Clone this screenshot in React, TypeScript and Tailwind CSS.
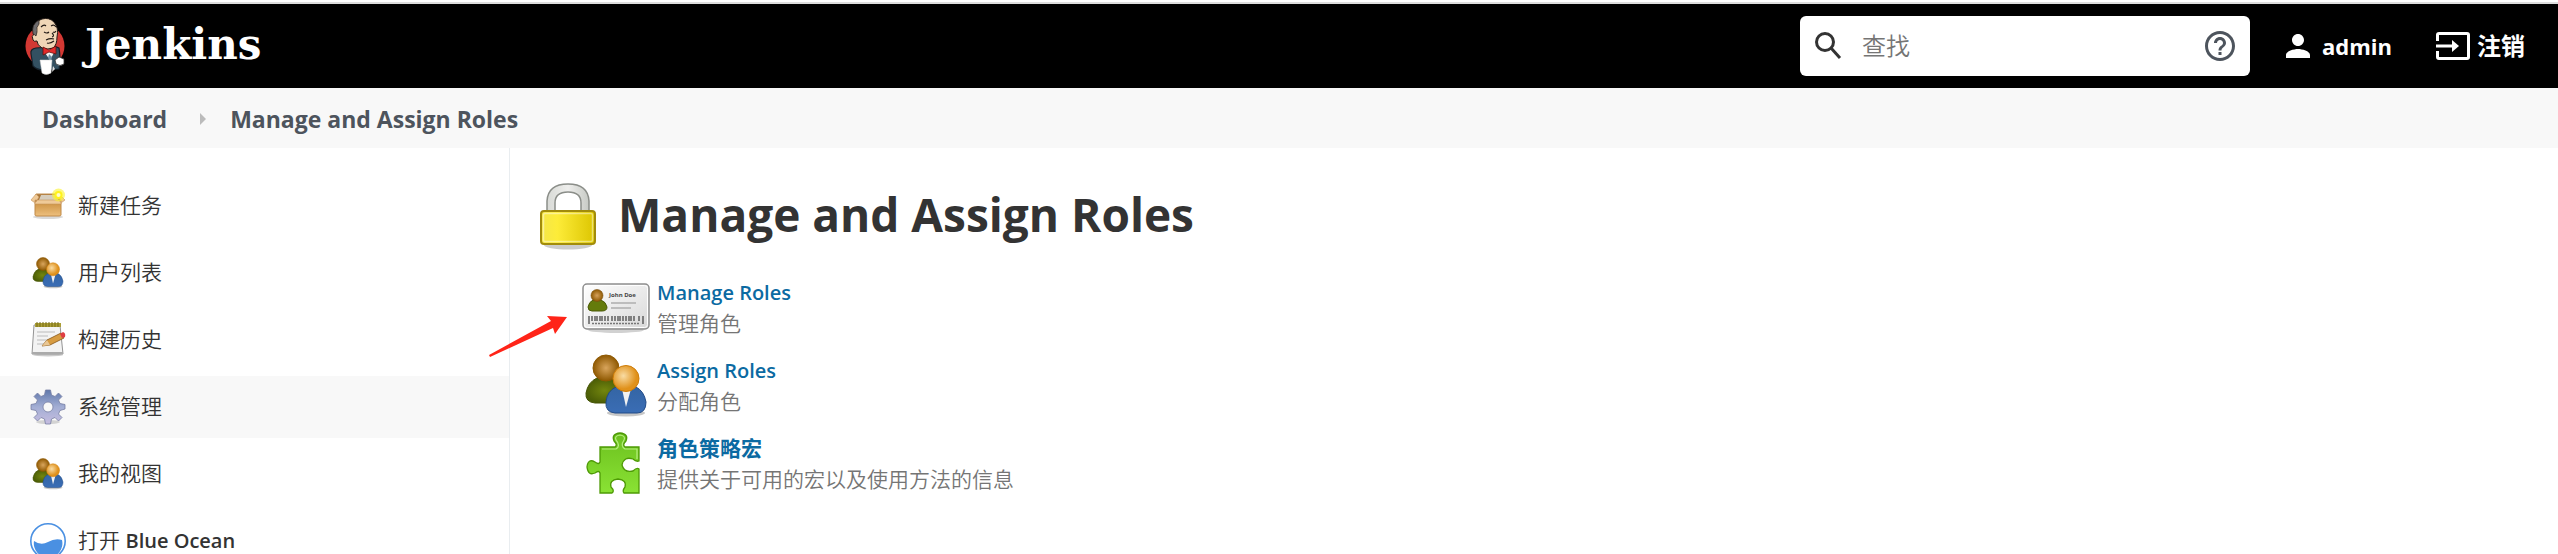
import React from "react";

function Butler() {
  return (
    <svg viewBox="0 0 60 70" className="h-[70px] w-[60px]" aria-hidden="true">
      <ellipse cx="30" cy="35" rx="19.500" ry="20.500" fill="#d33833" />
      <path d="M21 37 Q15 38 16 43 L18 55 Q22 59 28 59 L44 58 Q46 48 44 37 Q40 35 35 36 Z" fill="#335061" stroke="#14202a" strokeWidth="1.200" />
      <path d="M28 39 L35 49 L40 40 L34 37 Z" fill="#f4f4f4" />
      <path d="M34 43 L37 46 L36 50 L33 47Z" fill="#6d8fa3" />
      <path d="M19 23 Q16 25 18 29 Q19 31 22 30 Q22 34 27 37 Q33 39 38 37 Q42 34 42 26 Q44 17 39 11 Q34 6 27 8 Q18 11 18 19 Z" fill="#f0d6b7" stroke="#221a16" strokeWidth="1" />
      <path d="M18 23 Q16 13 24 9 L24 13 Q21 16 22 21 L21 25 Q19 23 18 23 Z" fill="#6d6b6d" stroke="#221a16" strokeWidth=".7" />
      <path d="M26 16 Q29 13 31 15 M36 15 Q39 13 41 16 M29 21 Q32 23 34 21 M38 21 Q40 22 41 20 M37 22 Q40 25 37 26 M31 29 Q35 27 39 28 M32 32 Q35 33 39 30" fill="none" stroke="#221a16" strokeWidth="1.100" />
      <path d="M28 36 L34 39 L41 35 L41 43 L34 41 L28 44 Z" fill="#e22b2b" stroke="#61100d" strokeWidth=".8" />
      <path d="M25 49 H37 L36 62 Q31 65 27 62 Z" fill="#fff" stroke="#ccc" strokeWidth=".5" />
      <path d="M40 49 L44 46 L49 48 V53 Q45 56 41 53 Z" fill="#fff" stroke="#333" strokeWidth=".8" />
      <path d="M38 55 L40 58 L37 61Z" fill="#ddd" />
    </svg>
  );
}

function People({ className }: { className: string }) {
  return (
    <svg viewBox="0 0 64 64" className={className} aria-hidden="true">
      <defs>
        <radialGradient id="brown"><stop offset="0" stopColor="#d9a55c" /><stop offset="1" stopColor="#8f5902" /></radialGradient>
        <radialGradient id="orange" cx=".4" cy=".4"><stop offset="0" stopColor="#f9dca4" /><stop offset="1" stopColor="#e0911b" /></radialGradient>
        <linearGradient id="blue" x2="0" y2="1"><stop offset="0" stopColor="#3465a4" /><stop offset="1" stopColor="#3a6db5" /></linearGradient>
        <radialGradient id="olive"><stop offset="0" stopColor="#73860e" /><stop offset="1" stopColor="#4c5e06" /></radialGradient>
      </defs>
      <ellipse cx="42" cy="59" rx="19" ry="3.500" fill="#000" opacity=".22" />
      <path d="M2 39 Q4 28 13 24 H31 Q38 27 39 39 Q38 48 28 49 H11 Q1 48 2 39Z" fill="url(#olive)" stroke="#445304" />
      <circle cx="22" cy="14" r="13" fill="url(#brown)" stroke="#8f5902" />
      <path d="M22 48 Q23 37 32 33 H52 Q60 37 62 48 Q62 59 53 59 H31 Q21 58 22 48Z" fill="url(#blue)" stroke="#204a87" />
      <path d="M38 35 H47 L42 53Z" fill="#f2f2f2" />
      <circle cx="42" cy="24.500" r="13" fill="url(#orange)" stroke="#ce7c08" />
    </svg>
  );
}

function Box() {
  return (
    <svg viewBox="0 0 36 36" className="size-9" aria-hidden="true">
      <defs><linearGradient id="box" x2="0" y2="1"><stop offset="0" stopColor="#c98e3c" /><stop offset="1" stopColor="#edbf7e" /></linearGradient></defs>
      <ellipse cx="18" cy="29" rx="15" ry="2" fill="#000" opacity=".15" />
      <path d="M6 6 H29 L31 13 H5Z" fill="#a8763a" stroke="#c39052" />
      <path d="M11 7 L27 7 L28 12 H9Z" fill="#d6cdbd" />
      <path d="M5 13 H31 V27 Q31 28 29 28 H7 Q5 28 5 27Z" fill="url(#box)" stroke="#c08a49" />
      <path d="M6 6 L1 12 Q4 15 6 14 L9 9Z M30 7 L35 12 Q32 15 30 14Z M5 12 H31 V16 H5Z" fill="#efca98" stroke="#c6945a" strokeWidth=".6" />
      <circle cx="28.500" cy="7" r="6.500" fill="#faf32d" opacity=".6" /><circle cx="28.500" cy="7" r="4" fill="#fff21c" /><circle cx="28.500" cy="7" r="2" fill="#fffccc" />
    </svg>
  );
}

function Notepad() {
  return (
    <svg viewBox="0 0 36 36" className="size-9" aria-hidden="true">
      <ellipse cx="18" cy="33" rx="15" ry="1.500" fill="#000" opacity=".2" />
      <path d="M4 3 H30 L33 32 H2Z" fill="#f3f3f3" stroke="#949494" /><path d="M2 30 H33 V32 H2Z" fill="#aaa" />
      <path d="M5 1 H31 V5 H5Z" fill="#ab9e35" />
      <path d="M7 0 V5 M10 0 V5 M13 0 V5 M16 0 V5 M19 0 V5 M22 0 V5 M25 0 V5 M28 0 V5" stroke="#746b16" />
      <path d="M7 10 H25 M7 14 H18 M7 18 H25 M7 22 H15" stroke="#bbb" />
      <path d="M12 24 L17 18 L31 11 L34 16 L20 23Z" fill="#d79c42" stroke="#875617" strokeWidth=".8" />
      <path d="M12 24 L17 18 L20 23Z" fill="#e9c795" /><path d="M30 12 L33 10 Q36 11 35 15 L32 16Z" fill="#df3d43" />
    </svg>
  );
}

function Gear() {
  return (
    <svg viewBox="0 0 36 36" className="size-9" aria-hidden="true">
      <defs><linearGradient id="gear" x2="0" y2="1"><stop offset="0" stopColor="#6078ab" /><stop offset=".5" stopColor="#a3aed4" /><stop offset="1" stopColor="#c6bde0" /></linearGradient></defs>
      <ellipse cx="18" cy="33" rx="12" ry="2" fill="#000" opacity=".15" />
      <path fill="url(#gear)" stroke="#777fa3" strokeWidth=".8" fillRule="evenodd" d="M15.500 1 H20.500 L21.500 6 L25 7.500 L28.500 4 L32 7.500 L28.500 11 L30 14.500 L35 15.500 V20 L30 21.500 L28.500 25 L32 28.500 L28.500 32 L25 28.500 L21.500 30 L20.500 35 H15.500 L14.500 30 L11 28.500 L7.500 32 L4 28.500 L7.500 25 L6 21.500 L1 20.500 V15.500 L6 14.500 L7.500 11 L4 7.500 L7.500 4 L11 7.500 L14.500 6Z M18 13 A5 5 0 1 0 18 23 A5 5 0 1 0 18 13Z" />
    </svg>
  );
}

function Ocean() {
  return (
    <svg viewBox="0 0 36 36" className="size-9" aria-hidden="true">
      <circle cx="18" cy="18" r="17.200" fill="#fff" stroke="#4a90e2" strokeWidth="1.600" />
      <path d="M4 18 Q11 23 18 19 T32 17 A14.300 14.300 0 1 1 4 18Z" fill="#4a90e2" />
    </svg>
  );
}

function Lock() {
  return (
    <svg viewBox="0 0 72 72" className="size-[72px]" aria-hidden="true">
      <defs>
        <linearGradient id="gold"><stop offset="0" stopColor="#f4e64a" /><stop offset=".3" stopColor="#fdec39" /><stop offset="1" stopColor="#dcc500" /></linearGradient>
        <linearGradient id="steel"><stop offset="0" stopColor="#d8dad6" /><stop offset=".5" stopColor="#eeeeec" /><stop offset="1" stopColor="#c7cac5" /></linearGradient>
      </defs>
      <ellipse cx="36" cy="63" rx="24" ry="4.500" fill="#000" opacity=".2" />
      <path d="M15 31 V19 Q16 2 36 2 Q56 2 57 19 V31 H49 V21 Q49 10 36 10 Q23 10 23 21 V31Z" fill="url(#steel)" stroke="#8b8e89" strokeWidth="1.500" />
      <rect x="9" y="29" width="54" height="33" rx="3" fill="url(#gold)" stroke="#a28c0b" strokeWidth="2" />
      <rect x="11.500" y="31.500" width="49" height="28" rx="1.500" fill="none" stroke="#fff" opacity=".45" strokeWidth="1.500" />
    </svg>
  );
}

function Badge() {
  return (
    <svg viewBox="0 0 72 64" className="h-16 w-[72px]" aria-hidden="true">
      <defs>
        <linearGradient id="card" x2="1" y2="1"><stop offset="0" stopColor="#fff" /><stop offset="1" stopColor="#d8d8d8" /></linearGradient>
        <radialGradient id="face"><stop offset="0" stopColor="#d6a15b" /><stop offset="1" stopColor="#8f5902" /></radialGradient>
      </defs>
      <ellipse cx="36" cy="54" rx="28" ry="3" fill="#000" opacity=".18" />
      <rect x="3" y="8" width="66" height="45" rx="4" fill="url(#card)" stroke="#8e8e8e" strokeWidth="1.500" />
      <rect x="4.500" y="9.500" width="63" height="42" rx="3" fill="none" stroke="#fff" />
      <path d="M8 31 Q9 26 13 24 H21 Q26 26 27 31 Q27 35 22 35 H12 Q8 35 8 31Z" fill="#647b0b" stroke="#4a5a06" />
      <circle cx="17" cy="19.500" r="6" fill="url(#face)" stroke="#7c5010" strokeWidth=".6" />
      <text x="29" y="21" fontSize="6" fontWeight="700" fill="#444">John Doe</text>
      <path d="M31 27 H56 M31 32 H51" stroke="#bdbdbd" strokeWidth="2" />
      <path d="M9 40 V48 M12 40 V45 M15 40 V45 M17 40 V45 M20 40 V45 M22 40 V45 M25 40 V45 M28 40 V45 M32 40 V45 M35 40 V45 M38 40 V45 M40 40 V45 M43 40 V45 M46 40 V45 M49 40 V45 M51 40 V45 M54 40 V45 M59 40 V45 M63 40 V48" stroke="#555" strokeWidth="1.400" />
      <path d="M12 47.500 H60" stroke="#777" strokeWidth="1.500" strokeDasharray="2 1" />
    </svg>
  );
}

function Puzzle() {
  return (
    <svg viewBox="0 1 64 64" className="size-16" aria-hidden="true">
      <defs><linearGradient id="green" x2="0" y2="1"><stop offset="0" stopColor="#6cc01e" /><stop offset="1" stopColor="#8ae234" /></linearGradient></defs>
      <path d="M16 16 H31 Q34 14 30 10 Q27 3 36 2 Q45 3 42 10 Q38 14 41 16 H55 V30 Q52 31 49 28 Q40 25 38 34 Q40 42 49 40 Q53 36 55 38 V62 H40 Q38 60 41 56 Q43 49 34 48 Q25 49 27 56 Q31 60 28 62 H16 V42 Q15 39 11 42 Q4 45 3 36 Q4 27 11 31 Q15 34 16 31Z" fill="url(#green)" stroke="#4e9a06" strokeWidth="1.300" />
      <path d="M18 18 H32 Q37 15 32 9 Q30 5 36 4 Q42 5 40 9 Q36 15 41 18 H53 V28" fill="none" stroke="#b6ee7e" strokeWidth="1.200" />
    </svg>
  );
}

const tasks = [
  { label: "新建任务", icon: <Box /> },
  { label: "用户列表", icon: <People className="size-9 p-0.5" /> },
  { label: "构建历史", icon: <Notepad /> },
  { label: "系统管理", icon: <Gear />, active: true },
  { label: "我的视图", icon: <People className="size-9 p-0.5" /> },
  { label: "打开 ", product: "Blue Ocean", icon: <Ocean /> },
];

const options = [
  { title: "Manage Roles", text: "管理角色", icon: <Badge /> },
  { title: "Assign Roles", text: "分配角色", icon: <People className="size-16" /> },
  { title: "角色策略宏", text: "提供关于可用的宏以及使用方法的信息", icon: <Puzzle />, bold: true },
];

export default function App() {
  return (
    <div className="h-screen overflow-hidden bg-white pt-0.5 font-['Open_Sans','Noto_Sans_CJK_SC',sans-serif] text-[#333]">
      <header className="flex h-[86px] items-center border-t-2 border-[#ddd] bg-black pr-[33px] pl-[15px] text-white">
        <a href="#" className="flex items-center gap-2.5">
          <Butler />
          <span className="pb-0.5 font-['DejaVu_Serif',serif] text-[42px] leading-none font-bold">Jenkins</span>
        </a>
        <form className="ml-auto flex h-[60px] w-[450px] items-center rounded-md bg-white px-3">
          <svg viewBox="0 0 32 32" className="size-8 shrink-0 fill-none stroke-[#333] stroke-3" aria-hidden="true"><circle cx="13" cy="12" r="8.500" /><path d="M19 18 L28 28" /></svg>
          <input aria-label="查找" placeholder="查找" className="min-w-0 flex-1 px-[18px] text-2xl font-[350] outline-none placeholder:text-[#757575]" />
          <a href="#" aria-label="帮助">
            <svg viewBox="0 0 24 24" className="size-9 fill-[#4d545d]" aria-hidden="true"><path d="M11 18h2v-2h-2v2zm1-16C6.480 2 2 6.480 2 12s4.480 10 10 10 10-4.480 10-10S17.520 2 12 2zm0 18c-4.410 0-8-3.590-8-8s3.590-8 8-8 8 3.590 8 8-3.590 8-8 8zm0-14c-2.210 0-4 1.790-4 4h2c0-1.100.9-2 2-2s2 .9 2 2c0 2-3 1.750-3 5h2c0-2.250 3-2.500 3-5 0-2.210-1.790-4-4-4z" /></svg>
          </a>
        </form>
        <a href="#" className="ml-[30px] flex items-center gap-1.5 text-[22px] font-bold">
          <svg viewBox="0 0 24 24" className="size-9 fill-white" aria-hidden="true"><path d="M12 12c2.210 0 4-1.790 4-4s-1.790-4-4-4-4 1.790-4 4 1.790 4 4 4zm0 2c-2.670 0-8 1.340-8 4v2h16v-2c0-2.660-5.330-4-8-4z" /></svg>
          admin
        </a>
        <a href="#" className="ml-[43px] flex items-center gap-1.5 text-2xl font-bold">
          <svg viewBox="0 0 36 30" className="h-[30px] w-9 fill-none stroke-white stroke-3" aria-hidden="true"><path d="M2.500 10 V4 Q2.500 2.500 4 2.500 H32 Q33.500 2.500 33.500 4 V26 Q33.500 27.500 32 27.500 H4 Q2.500 27.500 2.500 26 V20 M1 15 H19" /><path d="M17 9 L24 15 L17 21Z" fill="#fff" stroke="none" /></svg>
          注销
        </a>
      </header>

      <nav className="flex h-[60px] items-center bg-[#f8f8f8] px-[42px] pt-0.5 text-[23px] font-bold text-[#4d545d]">
        <a href="#">Dashboard</a>
        <svg viewBox="0 0 6 12" className="mr-6 ml-[33px] h-3 w-1.5 fill-[#bbb]" aria-hidden="true"><path d="M0 0 L6 6 L0 12Z" /></svg>
        <a href="#">Manage and Assign Roles</a>
      </nav>

      <div className="flex h-full">
        <aside className="flex w-[510px] shrink-0 flex-col gap-[5px] border-r border-[#e9edf0] pt-[27px]">
          {tasks.map((task) => (
            <a key={task.label} href="#" className={`flex h-[62px] shrink-0 items-center gap-3 px-[30px] text-[21px] font-[350] ${task.active ? "bg-[#f8f8f8]" : ""}`}>
              {task.icon}
              <span className="whitespace-pre">{task.label}<span className="text-xl font-semibold">{task.product}</span></span>
            </a>
          ))}
        </aside>
        <main className="relative flex-1 px-[22px] pt-[34px]">
          <h1 className="flex items-start gap-3.5 text-[46px] leading-[64px] font-bold"><Lock />Manage and Assign Roles</h1>
          <ul className="flex flex-col gap-3.5 pt-[22px] pl-12">
            {options.map((option) => (
              <li key={option.title} className="flex h-16 items-center gap-[5px] text-[21px] leading-[31px]">
                <div className="flex w-[72px] justify-center">{option.icon}</div>
                <div>
                  <a href="#" className={`block text-[#0b6aa2] ${option.bold ? "font-bold" : "text-xl leading-[31px] font-semibold"}`}>{option.title}</a>
                  <p className="font-[350] text-[#757575]">{option.text}</p>
                </div>
              </li>
            ))}
          </ul>
          <svg viewBox="0 0 80 44" className="absolute top-[166px] -left-[22px] h-11 w-20 fill-[#ff2418]" aria-hidden="true"><path d="M1 41 L63 7 L59 2 L79 3 L67 20 L65 14 L2 43Z" /></svg>
        </main>
      </div>
    </div>
  );
}
